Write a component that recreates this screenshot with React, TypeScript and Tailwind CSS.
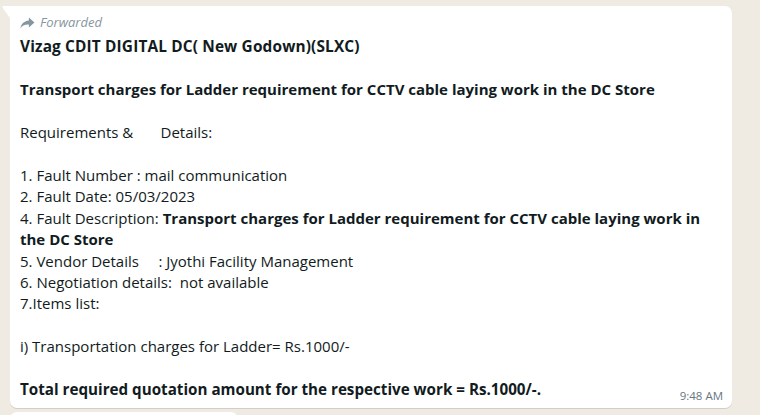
import React from "react";

const font = { fontFamily: '"Open Sans", "Noto Sans", sans-serif' };

export default function App() {
  return (
    <div
      className="w-[760px] h-[415px] overflow-hidden bg-[#efeae2] pt-[6px] pl-[10px] flex flex-col gap-[4px]"
      style={font}
    >
      <div className="relative w-[722px] shrink-0 bg-white rounded-[7px] rounded-tl-none shadow-[0_1px_0.5px_rgba(11,20,26,0.13)] pl-[10px] pr-[8px] pt-[8px] pb-[7px]">
        <svg
          className="absolute -left-[8px] top-0"
          width="8"
          height="13"
          viewBox="0 0 8 13"
        >
          <path d="M8 0 L1.5 0 C0.3 0 0 1 0.6 1.8 L8 12 Z" fill="#ffffff" />
        </svg>
        <div className="flex items-center gap-[5px] h-[17px] text-[#8696a0] text-[13px] italic">
          <svg width="15" height="12" viewBox="0 0 16 13">
            <path
              d="M9.5 0.5 L15.5 6 L9.5 11.5 L9.5 8.2 C5 8 2 9.3 0.3 12.5 C1 7.6 3.8 4.5 9.5 3.8 Z"
              fill="#8696a0"
            />
          </svg>
          <span>Forwarded</span>
        </div>
        <div className="text-[#111b21] text-[15px] leading-[21.45px] whitespace-pre mt-[5px]">
          <div className="font-bold text-[15.4px] tracking-[0.15px]">Vizag CDIT DIGITAL DC( New Godown)(SLXC)</div>
          <div>&nbsp;</div>
          <div className="font-bold">
            Transport charges for Ladder requirement for CCTV cable laying work in the DC Store
          </div>
          <div>&nbsp;</div>
          <div>{"Requirements &       Details:"}</div>
          <div>&nbsp;</div>
          <div>1. Fault Number : mail communication</div>
          <div>2. Fault Date: 05/03/2023</div>
          <div>
            4. Fault Description:{" "}
            <span className="font-bold">
              Transport charges for Ladder requirement for CCTV cable laying work in
            </span>
          </div>
          <div className="font-bold">the DC Store</div>
          <div>{"5. Vendor Details     : Jyothi Facility Management"}</div>
          <div>{"6. Negotiation details:  not available"}</div>
          <div>7.Items list:</div>
          <div>&nbsp;</div>
          <div>i) Transportation charges for Ladder= Rs.1000/-</div>
          <div>&nbsp;</div>
          <div className="font-bold text-[15.2px]">
            Total required quotation amount for the respective work = Rs.1000/-.
          </div>
        </div>
        <div className="absolute right-[9px] bottom-[3px] text-[11.5px] text-[#667781]">
          9:48 AM
        </div>
      </div>
      <div className="w-[228px] h-[40px] shrink-0 bg-white rounded-[7px]" />
    </div>
  );
}
